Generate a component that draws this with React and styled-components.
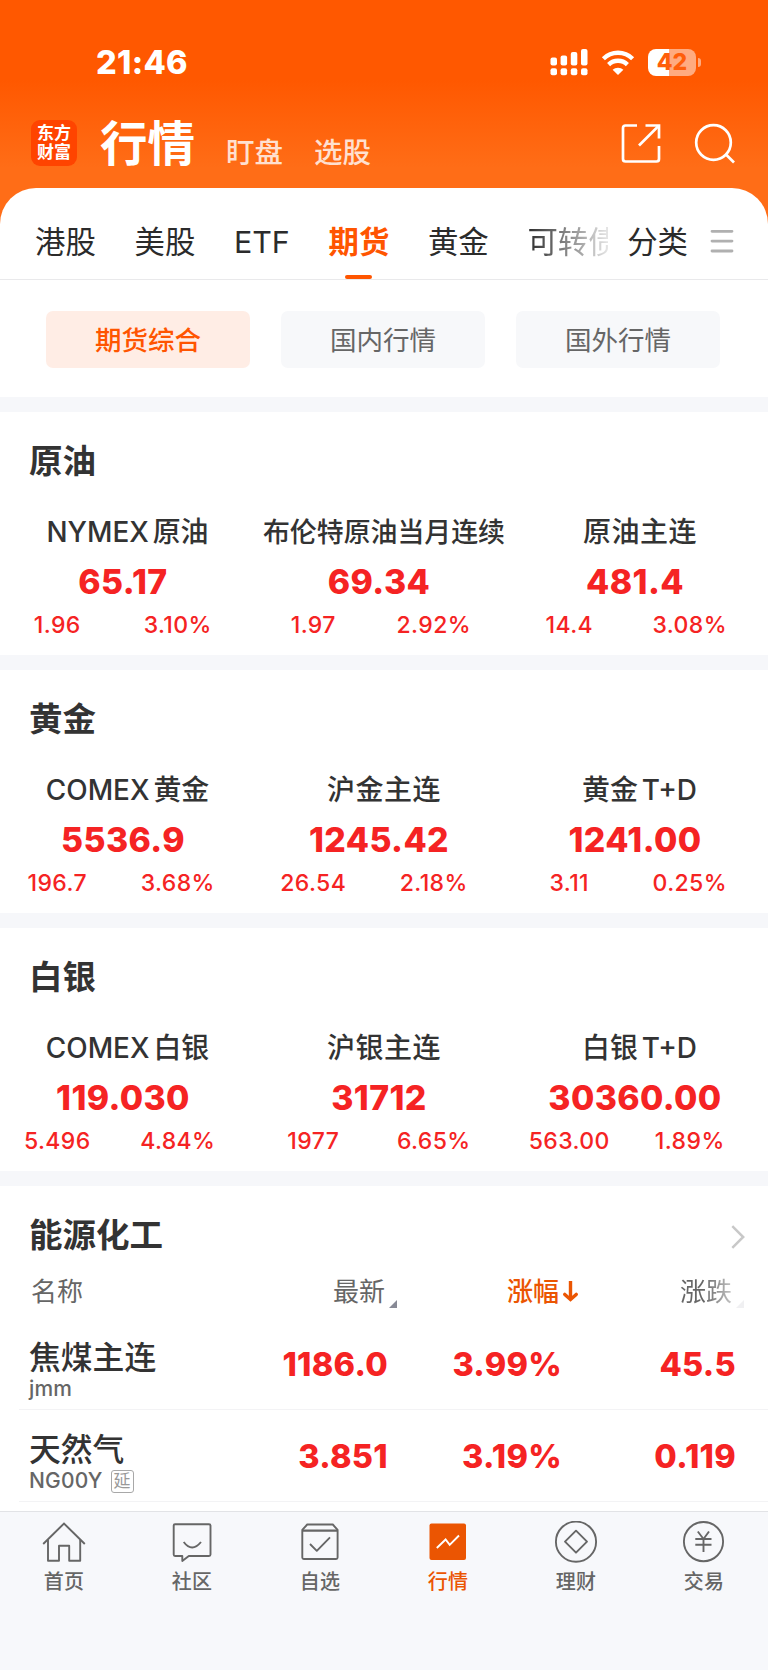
import React from 'react'
import styled, { createGlobalStyle } from 'styled-components'

const quoteGroups = [
    {
        title: '原油',
        items: [
            { name: 'NYMEX 原油', price: '65.17', change: '1.96', percent: '3.10%', mixed: true },
            { name: '布伦特原油当月连续', price: '69.34', change: '1.97', percent: '2.92%', small: true },
            { name: '原油主连', price: '481.4', change: '14.4', percent: '3.08%' },
        ],
    },
    {
        title: '黄金',
        items: [
            { name: 'COMEX 黄金', price: '5536.9', change: '196.7', percent: '3.68%', mixed: true },
            { name: '沪金主连', price: '1245.42', change: '26.54', percent: '2.18%' },
            { name: '黄金 T+D', price: '1241.00', change: '3.11', percent: '0.25%', mixed: true },
        ],
    },
    {
        title: '白银',
        items: [
            { name: 'COMEX 白银', price: '119.030', change: '5.496', percent: '4.84%', mixed: true },
            { name: '沪银主连', price: '31712', change: '1977', percent: '6.65%' },
            { name: '白银 T+D', price: '30360.00', change: '563.00', percent: '1.89%', mixed: true },
        ],
    },
]

const energyRows = [
    { name: '焦煤主连', code: 'jmm', price: '1186.0', percent: '3.99%', change: '45.5' },
    { name: '天然气', code: 'NG00Y', delayed: true, price: '3.851', percent: '3.19%', change: '0.119' },
]

const navItems = [
    { label: '首页', icon: HomeIcon },
    { label: '社区', icon: ChatIcon },
    { label: '自选', icon: BoxIcon },
    { label: '行情', icon: ChartIcon, active: true },
    { label: '理财', icon: DiamondIcon },
    { label: '交易', icon: YuanIcon },
]

function SignalIcon() {
    return (
        <svg width="38" height="28" viewBox="0 0 38 28" fill="#fff">
            <rect x="0.5" y="8.5" width="6.5" height="8" rx="2" />
            <rect x="10.6" y="6.5" width="6.5" height="10" rx="2" />
            <rect x="20.8" y="3" width="6.5" height="13.5" rx="2" />
            <rect x="31" y="0" width="6.5" height="16.5" rx="2" />
            <rect x="0.5" y="19.3" width="6.5" height="7" rx="2" />
            <rect x="10.6" y="19.3" width="6.5" height="7" rx="2" />
            <rect x="20.8" y="19.3" width="6.5" height="7" rx="2" />
            <rect x="31" y="19.3" width="6.5" height="7" rx="2" />
        </svg>
    )
}

function WifiIcon() {
    return (
        <svg width="34" height="26" viewBox="0 0 34 26" fill="none" stroke="#fff" strokeWidth="4.4">
            <path d="M2.4 8.8 A20.8 20.8 0 0 1 31.6 8.8" />
            <path d="M7.6 14.6 A13.4 13.4 0 0 1 26.4 14.6" />
            <path d="M17 25 L11.6 19.8 A7.8 7.8 0 0 1 22.4 19.8 Z" fill="#fff" stroke="none" />
        </svg>
    )
}

function ShareIcon() {
    return (
        <svg width="40" height="40" viewBox="0 0 40 40" fill="none" stroke="#fff" strokeWidth="2.7">
            <path d="M16 2.5 H4.5 Q2 2.5 2 5 V36 Q2 38.5 4.5 38.5 H35.5 Q38 38.5 38 36 V23" />
            <path d="M24.5 2.5 H38 V15.5" />
            <path d="M37.5 3 L18 22.5" />
        </svg>
    )
}

function SearchIcon() {
    return (
        <svg width="42" height="42" viewBox="0 0 42 42" fill="none" stroke="#fff" strokeWidth="2.7">
            <circle cx="19.5" cy="19.5" r="17.3" />
            <path d="M31.5 31 L40 39.5" />
        </svg>
    )
}

function MenuIcon() {
    return (
        <svg width="24" height="24" viewBox="0 0 24 24" fill="none" stroke="#b0b0b0" strokeWidth="2.8" strokeLinecap="round">
            <path d="M2 2.3 H22 M2 12.1 H22 M2 22 H22" />
        </svg>
    )
}

function ChevronIcon() {
    return (
        <svg width="14" height="24" viewBox="0 0 14 24" fill="none" stroke="#c8c8c8" strokeWidth="2.5">
            <path d="M1.3 1.2 L12.2 12 L1.3 22.8" />
        </svg>
    )
}

function ArrowDownIcon() {
    return (
        <svg width="15" height="22" viewBox="0 0 15 22" fill="none" stroke="#eb5502" strokeWidth="3.4">
            <path d="M7.5 0 V18.5" />
            <path d="M1.8 13.4 L7.5 18.5 L13.2 13.4" strokeLinecap="round" />
        </svg>
    )
}

function HomeIcon() {
    return (
        <svg width="44" height="44" viewBox="0 0 44 44" fill="none" stroke="#666" strokeWidth="1.9">
            <path d="M1.2 23 L22 2.5 L42.8 23" />
            <path d="M6 19 V39.8 H17 V24.7 H27.2 V39.8 H38.2 V19" strokeLinejoin="round" />
        </svg>
    )
}

function ChatIcon() {
    return (
        <svg width="44" height="44" viewBox="0 0 44 44" fill="none" stroke="#666" strokeWidth="1.9" strokeLinejoin="round">
            <path d="M5 3.2 H39 Q40.5 3.2 40.5 4.7 V33.5 Q40.5 35 39 35 H18.8 L12.3 40 V35 H5 Q3.7 35 3.7 33.5 V4.7 Q3.7 3.2 5 3.2 Z" />
            <path d="M13.7 21 Q22 32 31 21" />
        </svg>
    )
}

function BoxIcon() {
    return (
        <svg width="44" height="44" viewBox="0 0 44 44" fill="none" stroke="#666" strokeWidth="1.9" strokeLinejoin="round">
            <path d="M4.3 8.8 L9.2 3.5 H34.8 L39.6 8.8 V36.5 Q39.6 38 38.1 38 H5.8 Q4.3 38 4.3 36.5 Z" />
            <path d="M4.3 9.6 H39.6" strokeWidth="2.2" />
            <path d="M12 23 L18.8 29.8 L32 16.3" />
        </svg>
    )
}

function ChartIcon() {
    return (
        <svg width="44" height="44" viewBox="0 0 44 44" fill="none">
            <rect x="3.5" y="2.5" width="36.5" height="36.5" rx="2" fill="#eb5502" />
            <path d="M10.8 27 L19.6 18.5 L23.7 23.8 L33 14.5" stroke="#fff" strokeWidth="1.9" />
        </svg>
    )
}

function DiamondIcon() {
    return (
        <svg width="44" height="44" viewBox="0 0 44 44" fill="none" stroke="#666" strokeWidth="1.9">
            <circle cx="22" cy="20.7" r="20.1" />
            <path d="M22 9.7 L33 20.7 L22 31.7 L11 20.7 Z" strokeLinejoin="round" />
        </svg>
    )
}

function YuanIcon() {
    return (
        <svg width="44" height="44" viewBox="0 0 44 44" fill="none" stroke="#666" strokeWidth="1.9">
            <circle cx="21.5" cy="20.6" r="19.6" />
            <path d="M15.8 10.5 L21.5 18 L27 10.5 M21.5 17.5 V31 M13.3 18 H29.5 M13.3 23.7 H29.5" />
        </svg>
    )
}

function QuoteSection({ title, items }) {
    return (
        <Section>
            <SectionTitle>{title}</SectionTitle>
            <QuoteGrid>
                {items.map((item) => (
                    <Quote key={item.name}>
                        <QuoteName $small={item.small} $mixed={item.mixed}>{item.name}</QuoteName>
                        <QuotePrice>{item.price}</QuotePrice>
                        <QuoteChange>
                            <span>{item.change}</span>
                            <span>{item.percent}</span>
                        </QuoteChange>
                    </Quote>
                ))}
            </QuoteGrid>
        </Section>
    )
}

function App() {
    return (
        <Page>
            <GlobalStyle />
            <Header>
                <StatusBar>
                    <Time>21:46</Time>
                    <StatusIcons>
                        <SignalIcon />
                        <WifiIcon />
                        <Battery>
                            <BatteryBody>42</BatteryBody>
                            <BatteryCap />
                        </Battery>
                    </StatusIcons>
                </StatusBar>
                <TitleBar>
                    <Logo>
                        <span>东方</span>
                        <span>财富</span>
                    </Logo>
                    <PageTitle>行情</PageTitle>
                    <TitleLink>盯盘</TitleLink>
                    <TitleLink>选股</TitleLink>
                    <TitleActions>
                        <ShareIcon />
                        <SearchIcon />
                    </TitleActions>
                </TitleBar>
            </Header>

            <Sheet>
                <Tabs>
                    <Tab>港股</Tab>
                    <Tab>美股</Tab>
                    <Tab>ETF</Tab>
                    <Tab $active>期货</Tab>
                    <Tab>黄金</Tab>
                    <FadedTab>可转债</FadedTab>
                    <Category>分类</Category>
                    <MenuIcon />
                </Tabs>
                <Pills>
                    <Pill $active>期货综合</Pill>
                    <Pill>国内行情</Pill>
                    <Pill>国外行情</Pill>
                </Pills>
            </Sheet>

            {quoteGroups.map((group) => (
                <QuoteSection key={group.title} title={group.title} items={group.items} />
            ))}

            <TableSection>
                <TableTop>
                    <SectionTitle>能源化工</SectionTitle>
                    <ChevronIcon />
                </TableTop>
                <TableHead>
                    <span>名称</span>
                    <HeadCell>最新<Corner /></HeadCell>
                    <HeadCell $active>涨幅<ArrowDownIcon /></HeadCell>
                    <HeadCell $faded>涨跌<Corner /></HeadCell>
                </TableHead>
                {energyRows.map((row) => (
                    <Row key={row.code}>
                        <div>
                            <RowName>{row.name}</RowName>
                            <RowCode>
                                {row.code}
                                {row.delayed && <Delay>延</Delay>}
                            </RowCode>
                        </div>
                        <RowValue>{row.price}</RowValue>
                        <RowValue>{row.percent}</RowValue>
                        <RowValue>{row.change}</RowValue>
                    </Row>
                ))}
            </TableSection>

            <BottomNav>
                {navItems.map(({ label, icon: Icon, active }) => (
                    <NavItem key={label} $active={active}>
                        <Icon />
                        <span>{label}</span>
                    </NavItem>
                ))}
            </BottomNav>
        </Page>
    )
}

const GlobalStyle = createGlobalStyle`
    *{
        box-sizing: border-box;
    }
    body{
        margin: 0;
        background: #fff;
        font-family: Inter, "Noto Sans CJK SC", sans-serif;
        color: #333;
    }
    svg{
        display: block;
        flex-shrink: 0;
    }
`

const Page = styled.div`
    width: 768px;
    height: 1670px;
    display: flex;
    flex-direction: column;
    overflow: hidden;
    white-space: nowrap;
`

const Header = styled.header`
    height: 230px;
    margin-bottom: -42px;
    flex-shrink: 0;
    background: linear-gradient(#ff5800 0, #ff5800 80px, #ff6d17 168px);
    color: #fff;
`

const StatusBar = styled.div`
    height: 106px;
    padding: 43px 67px 0 96px;
    display: flex;
    justify-content: space-between;
`

const Time = styled.div`
    font-size: 32.5px;
    line-height: 40px;
    font-weight: 800;
    letter-spacing: 0.3px;
`

const StatusIcons = styled.div`
    height: 40px;
    display: flex;
    align-items: center;
    svg:first-child{
        margin-right: 13px;
    }
    svg:nth-child(2){
        margin-right: 13px;
    }
`

const Battery = styled.div`
    display: flex;
    align-items: center;
    gap: 2px;
    margin-top: -1px;
`

const BatteryBody = styled.div`
    width: 48px;
    height: 27px;
    border-radius: 8px;
    background: linear-gradient(90deg, #fff 21px, #ffab80 21px);
    color: #ff5e0a;
    font-size: 23px;
    line-height: 27px;
    font-weight: 800;
    text-align: center;
`

const BatteryCap = styled.div`
    width: 3px;
    height: 9px;
    border-radius: 0 4px 4px 0;
    background: #ffab80;
`

const TitleBar = styled.div`
    height: 82px;
    padding: 0 32px 0 31px;
    display: flex;
`

const Logo = styled.div`
    width: 46px;
    height: 46px;
    margin-top: 14px;
    padding-top: 4px;
    border-radius: 9px;
    background: #ff4400;
    font-size: 17px;
    line-height: 19px;
    font-weight: 700;
    text-align: center;
    display: flex;
    flex-direction: column;
`

const PageTitle = styled.h1`
    margin: 8px 31px 0 23px;
    font-size: 47.5px;
    line-height: 60px;
    font-weight: 700;
`

const TitleLink = styled.span`
    margin: 27px 31px 0 0;
    font-size: 28.5px;
    line-height: 40px;
    font-weight: 500;
    color: #ffe0d0;
`

const TitleActions = styled.div`
    margin: 17px 0 0 auto;
    display: flex;
    gap: 33px;
`

const Sheet = styled.div`
    height: 209px;
    flex-shrink: 0;
    border-radius: 36px 36px 0 0;
    background: #fff;
    position: relative;
`

const Tabs = styled.nav`
    height: 92px;
    padding: 16px 34px 0 35px;
    border-bottom: 1px solid #e9e9eb;
    display: flex;
    align-items: center;
    font-size: 30.4px;
    line-height: 75px;
    svg{
        margin: -2px 0 0 22px;
    }
`

const Tab = styled.span`
    height: 75px;
    padding-top: 1px;
    margin-right: 38.7px;
    font-weight: ${({ $active }) => ($active ? 700 : 400)};
    color: ${({ $active }) => ($active ? '#ff5500' : '#2b2b2b')};
    position: relative;
    &::after{
        content: "";
        display: ${({ $active }) => ($active ? 'block' : 'none')};
        position: absolute;
        left: 17px;
        bottom: 0;
        width: 27px;
        height: 4px;
        border-radius: 2px;
        background: #ff5500;
    }
`

const FadedTab = styled.span`
    width: 81px;
    height: 75px;
    padding-top: 1px;
    overflow: hidden;
    color: transparent;
    background: linear-gradient(90deg, #2b2b2b, #e5e5e5);
    background-clip: text;
`

const Category = styled.span`
    height: 75px;
    padding-top: 1px;
    margin-left: 19px;
    color: #2b2b2b;
`

const Pills = styled.div`
    padding: 31px 48px 0 46px;
    display: grid;
    grid-template-columns: repeat(3, 1fr);
    gap: 31px;
`

const Pill = styled.button`
    height: 57px;
    padding: 1px 0 0;
    border: none;
    border-radius: 7px;
    font-family: inherit;
    font-size: 26.5px;
    line-height: 56px;
    font-weight: ${({ $active }) => ($active ? 500 : 400)};
    color: ${({ $active }) => ($active ? '#ff5500' : '#666')};
    background: ${({ $active }) => ($active ? '#ffede5' : '#f7f8fa')};
`

const Section = styled.section`
    height: 258px;
    flex-shrink: 0;
    border-top: 15px solid #f6f7fa;
`

const SectionTitle = styled.h2`
    margin: 0;
    padding: 29px 0 0 29px;
    font-size: 33.5px;
    line-height: 40px;
    font-weight: 700;
`

const QuoteGrid = styled.div`
    padding-top: 30px;
    display: grid;
    grid-template-columns: repeat(3, 256px);
    text-align: center;
`

const Quote = styled.div`
    display: flex;
    flex-direction: column;
`

const QuoteName = styled.div`
    padding-right: ${({ $mixed }) => ($mixed ? '1px' : '0')};
    font-size: ${({ $small, $mixed }) => ($small ? '26.9px' : $mixed ? '27.9px' : '28px')};
    letter-spacing: ${({ $small, $mixed }) => ($small || $mixed ? '0' : '0.5px')};
    word-spacing: -3.5px;
    line-height: 42px;
    font-weight: 500;
`

const QuotePrice = styled.div`
    margin-top: 8px;
    padding-right: 10px;
    font-size: 33.8px;
    line-height: 42px;
    font-weight: 800;
    letter-spacing: 0.4px;
    color: #f52323;
`

const QuoteChange = styled.div`
    margin: 6px 18px 0 -3px;
    display: grid;
    grid-template-columns: 1fr 1fr;
    font-size: 23px;
    line-height: 32px;
    font-weight: 500;
    letter-spacing: 0.4px;
    color: #f52323;
`

const TableSection = styled.section`
    height: 340px;
    flex-shrink: 0;
    border-top: 15px solid #f6f7fa;
`

const TableTop = styled.div`
    padding-right: 23px;
    display: flex;
    justify-content: space-between;
    svg{
        margin-top: 39px;
    }
`

const TableHead = styled.div`
    height: 63px;
    padding: 17px 0 0 31px;
    display: grid;
    grid-template-columns: 302px 174px 173px 1fr;
    font-size: 26px;
    line-height: 40px;
    color: #666;
`

const HeadCell = styled.div`
    display: flex;
    color: ${({ $active, $faded }) => ($active ? '#eb5502' : $faded ? 'transparent' : '#666')};
    background: ${({ $faded }) => ($faded ? 'linear-gradient(90deg, #666 24px, #e0e0e0 60px)' : 'none')};
    background-clip: ${({ $faded }) => ($faded ? 'text' : 'border-box')};
    font-weight: ${({ $active }) => ($active ? 500 : 400)};
    svg{
        margin: 9px 0 0 4px;
    }
    i{
        border-bottom-color: ${({ $faded }) => ($faded ? '#f0f0f2' : '#888a96')};
    }
`

const Corner = styled.i`
    width: 0;
    height: 0;
    margin: 28px 0 0 4px;
    border-left: 8px solid transparent;
    border-bottom: 8px solid;
`

const Row = styled.div`
    height: 92px;
    margin-left: 19px;
    padding: 20px 32px 0 10px;
    border-bottom: 1px solid #f3f3f5;
    display: grid;
    grid-template-columns: 185px 174px 174px 174px;
`

const RowName = styled.div`
    font-size: 31.8px;
    line-height: 40px;
    font-weight: 500;
`

const RowCode = styled.div`
    height: 24px;
    margin-top: -1px;
    display: flex;
    align-items: center;
    font-size: 21px;
    line-height: 24px;
    font-weight: 500;
    letter-spacing: 0.2px;
    color: #666;
`

const Delay = styled.span`
    width: 23px;
    height: 23px;
    margin-left: 8px;
    border: 1px solid #a8a8a8;
    border-radius: 3px;
    font-size: 17px;
    line-height: 20px;
    font-weight: 400;
    color: #999;
    text-align: center;
`

const RowValue = styled.div`
    padding-top: 7px;
    font-size: 32.5px;
    line-height: 40px;
    font-weight: 800;
    letter-spacing: 0.3px;
    text-align: right;
    color: #f52323;
`

const BottomNav = styled.nav`
    height: 159px;
    flex-shrink: 0;
    padding-top: 9px;
    border-top: 1px solid #e2e3e6;
    background: #f7f8fb;
    display: grid;
    grid-template-columns: repeat(6, 1fr);
`

const NavItem = styled.div`
    display: flex;
    flex-direction: column;
    align-items: center;
    font-size: 20px;
    line-height: 30px;
    font-weight: 500;
    letter-spacing: 0.3px;
    color: ${({ $active }) => ($active ? '#eb5502' : '#666')};
    span{
        margin-top: 2px;
    }
`

export default App
